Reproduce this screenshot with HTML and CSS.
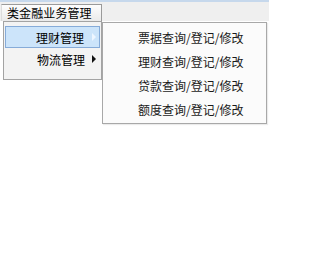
FILE: index.html
```html
<!DOCTYPE html>
<html>
<head>
<meta charset="utf-8">
<link rel="stylesheet" href="styles.css">
</head>
<body>
<div class="topbar">
  <div class="menu-btn">类金融业务管理</div>
</div>
<div class="dropdown">
  <div class="item active"><span>理财管理</span><i class="arrow light"></i></div>
  <div class="item"><span>物流管理</span><i class="arrow"></i></div>
</div>
<div class="submenu">
  <div class="sub-item">票据查询/登记/修改</div>
  <div class="sub-item">理财查询/登记/修改</div>
  <div class="sub-item">贷款查询/登记/修改</div>
  <div class="sub-item">额度查询/登记/修改</div>
</div>
</body>
</html>
```
FILE: styles.css
```css
html, body {
  margin: 0;
  padding: 0;
  background: #ffffff;
  width: 269px;
  height: 273px;
  overflow: hidden;
  font-family: "Noto Sans CJK SC", "Microsoft YaHei", sans-serif;
  font-size: 12px;
  color: #000000;
}

.topbar {
  height: 19px;
  border-top: 2px solid #c6d8ec;
  background: #efefef;
  display: flex;
  align-items: flex-end;
  padding-left: 1px;
}

.menu-btn {
  height: 16px;
  width: 94px;
  padding-left: 5px;
  line-height: 16px;
  border: 1px solid #9a9a9a;
  border-bottom: none;
  border-left-color: #dcdcdc;
  background: linear-gradient(#fdfdfd, #eaeaea);
  white-space: nowrap;
  overflow: hidden;
  letter-spacing: 0.1px;
}

.dropdown {
  position: absolute;
  left: 3px;
  top: 21px;
  width: 97px;
  height: 53px;
  border: 1px solid #a3a3a3;
  background: #f3f3f3;
  padding-top: 4px;
  box-sizing: content-box;
}

.item {
  height: 22px;
  margin: 0 1px 0 1px;
  display: flex;
  align-items: center;
  justify-content: flex-end;
  padding-right: 15px;
  position: relative;
  box-sizing: border-box;
}

.item.active {
  background: #cce4fa;
  border: 1px solid #86abd8;
}

.arrow {
  position: absolute;
  right: 4px;
  top: 7px;
  width: 0;
  height: 0;
  border-top: 4px solid transparent;
  border-bottom: 4px solid transparent;
  border-left: 4px solid #111111;
}

.arrow.light {
  top: 6px;
  right: 3px;
  border-left-color: #eef6ff;
}

.submenu {
  position: absolute;
  left: 102px;
  top: 22px;
  width: 163px;
  height: 97px;
  border: 1px solid #a8a8a8;
  background: #fbfbfb;
  padding-top: 3px;
  box-shadow: 1px 1px 1px rgba(0, 0, 0, 0.08);
}

.sub-item {
  height: 24px;
  line-height: 24px;
  padding-left: 35px;
  color: #1a1a1a;
  white-space: nowrap;
}
```
